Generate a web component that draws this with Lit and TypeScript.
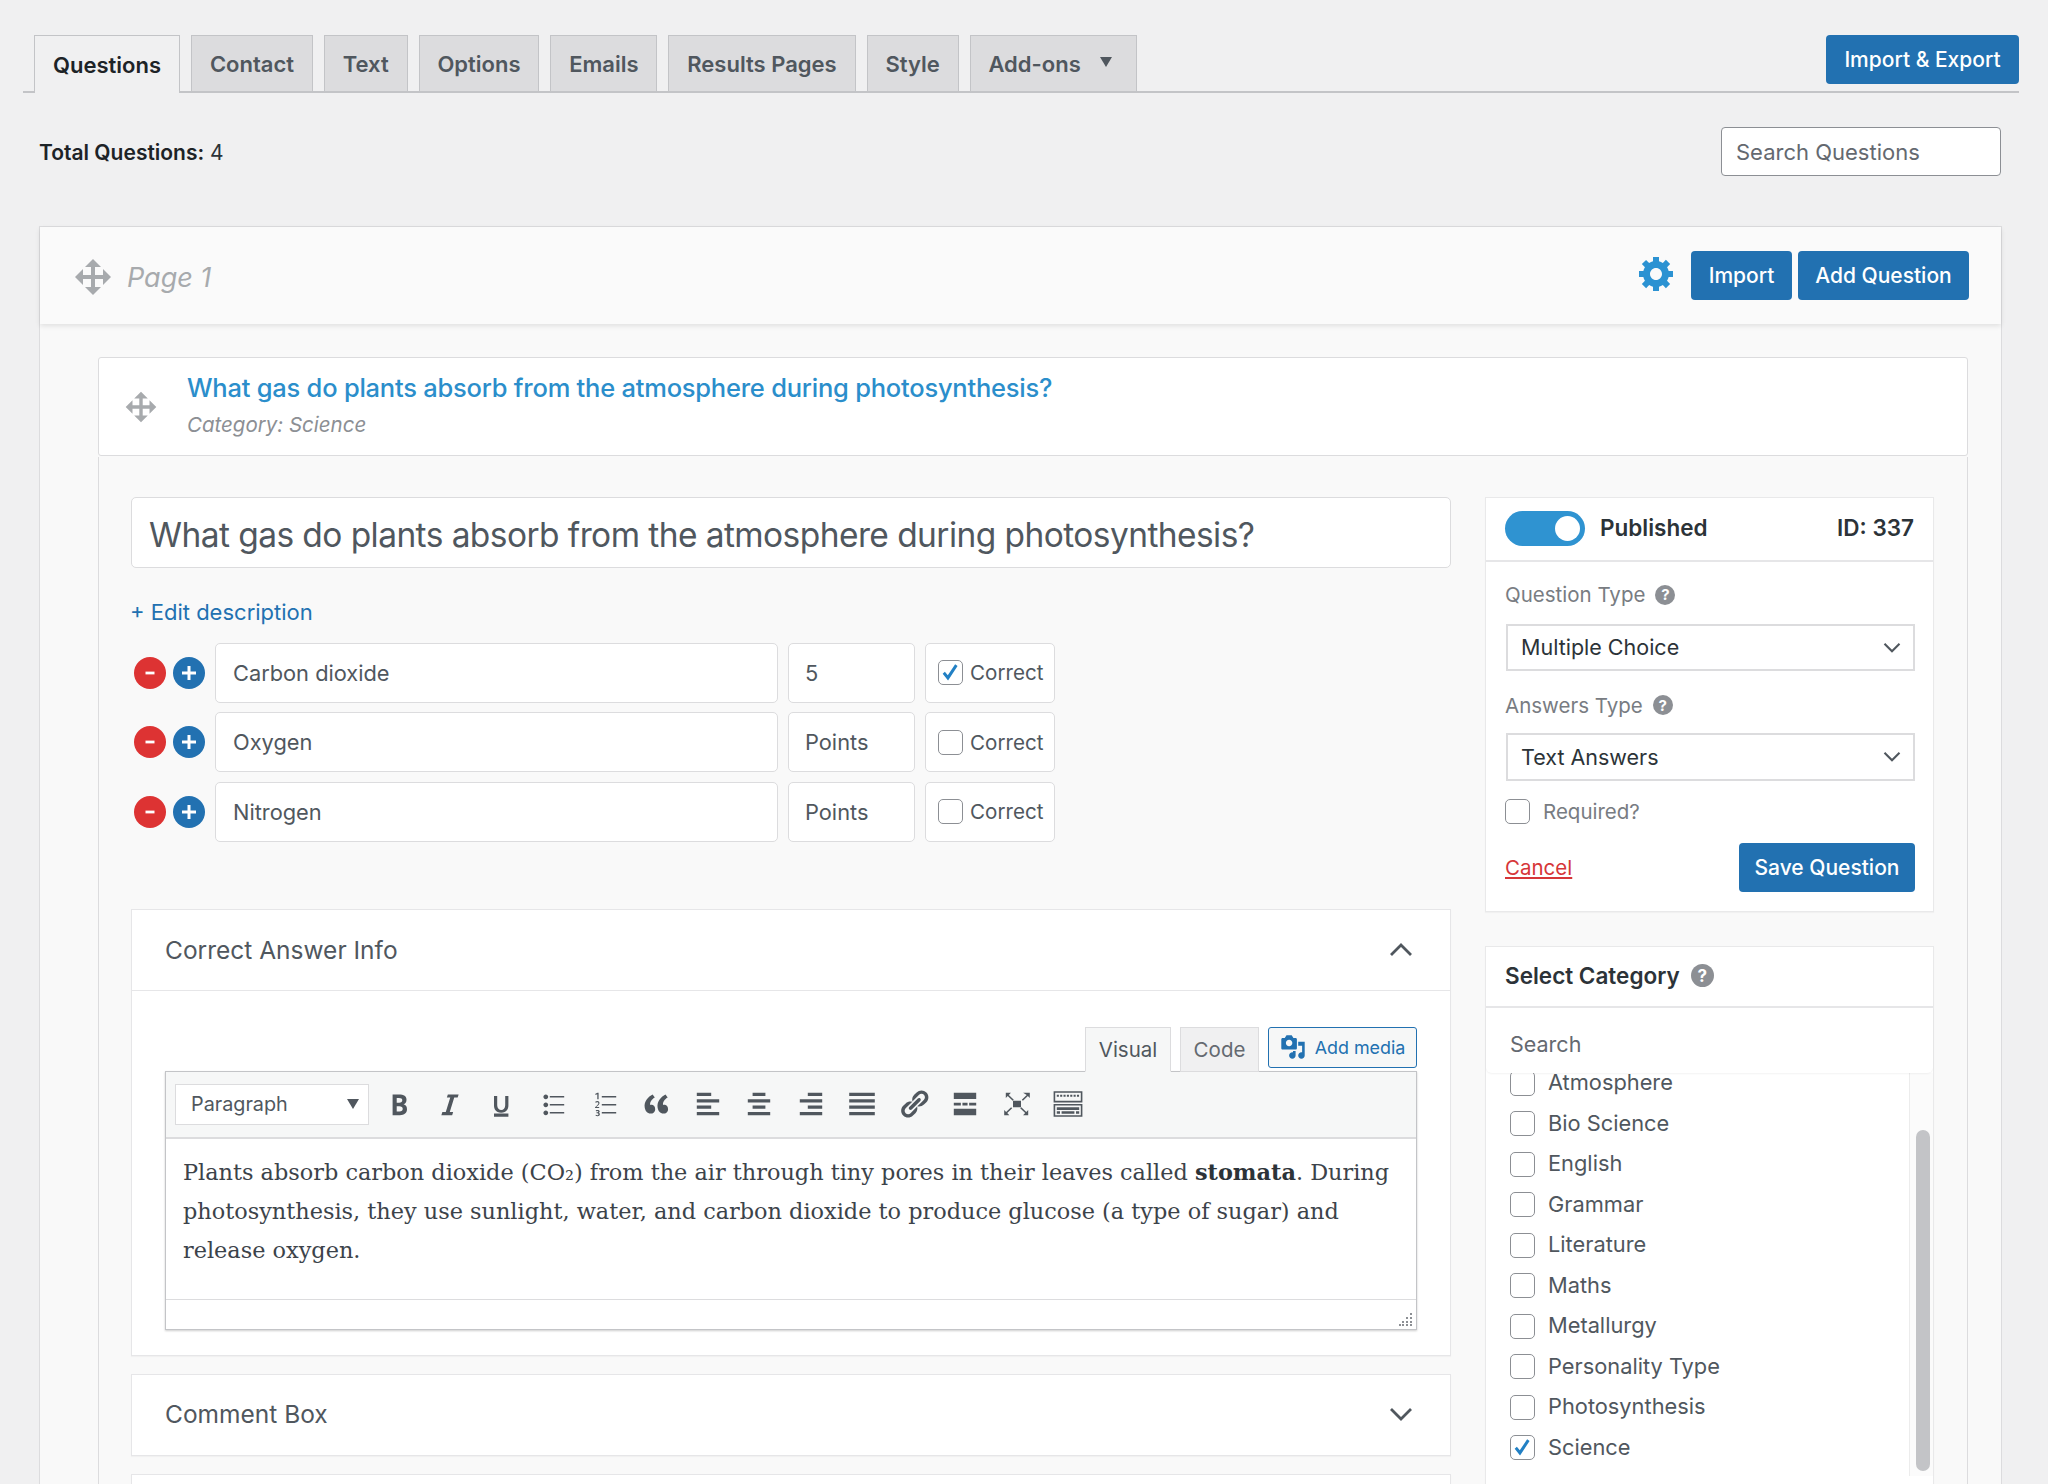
import { LitElement, html, css, svg } from "lit";
import { customElement } from "lit/decorators.js";

const keys = (xs: number[], y: number, h: number, w = 1.3) =>
  xs.map((x) => `M${x} ${y}h${w}v${h}h-${w}z`).join("");
const range = (a: number, b: number, s: number) => {
  const r: number[] = [];
  for (let x = a; x < b; x += s) r.push(Math.round(x * 10) / 10);
  return r;
};

const P: Record<string, string> = {
  move: "M19 10l-4 4v-3h-4v4h3l-4 4-4-4h3v-4H5v3l-4-4 4-4v3h4V5H6l4-4 4 4h-3v4h4V6z",
  gear: "M18 12h-2.18c-.17.7-.44 1.35-.81 1.93l1.54 1.54-2.1 2.1-1.54-1.54c-.58.36-1.23.63-1.91.79V19H8v-2.18c-.68-.16-1.33-.43-1.91-.79l-1.54 1.54-2.12-2.12 1.54-1.54c-.36-.58-.63-1.23-.79-1.91H1V9.03h2.17c.16-.7.44-1.35.8-1.94L2.43 5.55l2.1-2.1 1.54 1.54c.58-.37 1.24-.64 1.93-.81V2h3v2.18c.68.16 1.33.43 1.91.79l1.54-1.54 2.12 2.12-1.54 1.54c.36.59.64 1.24.8 1.94H18V12zm-8.5 1.5c1.66 0 3-1.34 3-3s-1.34-3-3-3-3 1.34-3 3 1.34 3 3 3z",
  bold: "M6 4v13h4.54c1.37 0 2.46-.33 3.26-1 .8-.66 1.2-1.58 1.2-2.77 0-.84-.17-1.51-.51-2.01s-.9-.85-1.67-1.03v-.09c.57-.1 1.02-.4 1.36-.9s.51-1.13.51-1.91c0-1.14-.39-1.98-1.17-2.5C12.75 4.26 11.5 4 9.78 4H6zm2.57 5.15V6.26h1.36c.73 0 1.27.11 1.61.32.34.22.51.58.51 1.07 0 .54-.16.92-.47 1.15s-.82.35-1.51.35h-1.5zm0 2.19h1.6c1.44 0 2.16.53 2.16 1.61 0 .6-.17 1.05-.51 1.34s-.86.43-1.57.43H8.57v-3.38z",
  italic: "M14.78 6h-2.13l-2.8 9h2.12l-.62 2H4.6l.62-2h2.14l2.8-9H8.03l.62-2h6.75z",
  underline: "M14 5h-2v5.71c0 1.99-1.12 2.98-2.45 2.98-1.32 0-2.55-1-2.55-2.96V5H5v5.87c0 1.91 1 4.54 4.48 4.54 3.49 0 4.52-2.58 4.52-4.54V5zm0 13v-2H5v2h9z",
  ul: "M5.5 7C4.67 7 4 6.33 4 5.5 4 4.68 4.67 4 5.5 4 6.32 4 7 4.68 7 5.5 7 6.33 6.32 7 5.5 7zM8 5h9v1H8V5zm-2.5 7c-.83 0-1.5-.67-1.5-1.5C4 9.68 4.67 9 5.5 9c.82 0 1.5.68 1.5 1.5 0 .83-.68 1.5-1.5 1.5zM8 10h9v1H8v-1zm-2.5 7c-.83 0-1.5-.67-1.5-1.5 0-.82.67-1.5 1.5-1.5.82 0 1.5.68 1.5 1.5 0 .83-.68 1.5-1.5 1.5zM8 15h9v1H8v-1z",
  ol: "M6 7V3h-.69L4 3.67v.71l1.18-.55V7H6zm2-2v1h9V5H8zm-1.64 7.5v-.7H4.69v-.01l.59-.53c.78-.69 1.27-1.19 1.27-1.85 0-.72-.49-1.21-1.3-1.21-.54 0-1 .19-1.33.44l.2.62c.24-.18.59-.36.99-.36.53 0 .74.3.74.67 0 .53-.49 1.03-1.53 1.95l-.56.51v.47h2.6zM8 10v1h9v-1H8zm0 5v1h9v-1H8zm-2.7 2.6c.9 0 1.5-.5 1.5-1.2 0-.5-.3-.8-.7-.9.4-.2.6-.5.6-.8 0-.6-.5-1-1.3-1-.5 0-.9.1-1.2.3l.2.6c.2-.1.5-.3.9-.3.3 0 .5.2.5.4 0 .4-.4.5-.8.5h-.3v.6h.3c.5 0 .9.2.9.6 0 .3-.2.6-.7.6-.4 0-.7-.2-.9-.3l-.2.6c.3.2.8.3 1.2.3z",
  quote: "M9.49 13.22c0-.74-.2-1.38-.61-1.9-.62-.78-1.83-.88-2.53-.72-.29-1.65 1.11-3.75 2.92-4.65L7.88 4c-2.73 1.3-5.42 4.28-4.96 8.05C3.21 14.43 4.59 16 6.54 16c.85 0 1.56-.25 2.12-.75s.83-1.18.83-2.03zm8.05 0c0-.74-.2-1.38-.61-1.9-.63-.78-1.83-.88-2.53-.72-.29-1.65 1.11-3.75 2.92-4.65L15.93 4c-2.73 1.3-5.41 4.28-4.96 8.05.29 2.38 1.66 3.95 3.61 3.95.85 0 1.56-.25 2.12-.75s.84-1.18.84-2.03z",
  left: "M12 5V3H3v2h9zm5 4V7H3v2h14zm-5 4v-2H3v2h9zm5 4v-2H3v2h14z",
  center: "M14 5V3H6v2h8zm3 4V7H3v2h14zm-3 4v-2H6v2h8zm3 4v-2H3v2h14z",
  right: "M17 5V3H8v2h9zm0 4V7H3v2h14zm0 4v-2H8v2h9zm0 4v-2H3v2h14z",
  justify: "M2 3h16v2H2V3zm0 4h16v2H2V7zm0 4h16v2H2v-2zm0 4h16v2H2v-2z",
  link: "M17.74 2.76c1.68 1.69 1.68 4.41 0 6.1l-1.53 1.52c-1.12 1.12-2.7 1.47-4.14 1.09l2.62-2.61.76-.77.76-.76c.84-.84.84-2.2 0-3.04-.84-.85-2.2-.85-3.04 0l-.77.76-3.38 3.38c-.37-1.44-.02-3.02 1.1-4.14l1.52-1.53c1.69-1.68 4.42-1.68 6.1 0zM8.59 13.43l5.34-5.34c.42-.42.42-1.1 0-1.52-.44-.43-1.13-.39-1.53 0l-5.33 5.34c-.42.42-.42 1.1 0 1.52.44.43 1.13.39 1.52 0zm-.76 2.29l4.14-4.15c.38 1.44.03 3.02-1.09 4.14l-1.52 1.53c-1.69 1.68-4.41 1.68-6.1 0-1.68-1.68-1.68-4.42 0-6.1l1.53-1.52c1.12-1.12 2.7-1.47 4.14-1.1l-4.14 4.15c-.85.84-.85 2.2 0 3.05.84.84 2.2.84 3.04 0z",
  more: "M3 3h14v3.8H3V3zm0 6.2h4.4v1.8H3V9.2zm5.4 0h3.2v1.8H8.4V9.2zm4.2 0H17v1.8h-4.4V9.2zM3 13h14v4H3v-4z",
  full: "M7.5 8h5v4h-5V8zM2 3h4.2L4.9 4.3 8 7.3 7.3 8 4.2 5 3 6.3V3H2zm16 0v3.3L16.8 5l-3.1 3-.7-.7 3.1-3L13.8 3H18zM2 17v-3.3L3.2 15l3.1-3 .7.7-3.1 3L5.2 17H2zm16 0h-4.2l1.3-1.3-3.1-3 .7-.7 3.1 3 1.2-1.3V17z",
  kb:
    "M1 2h18v7H1V2zm1 1v5h16V3H2z" +
    keys(range(3, 17, 2.1), 4.2, 1.3) +
    "M1 10h18v8H1v-8zm1 1v6h16v-6H2zm1 1h14v1.8H3V12z" +
    "M3 14.6h2v1.5H3zM6 14.6h8v1.5H6zM15 14.6h2v1.5h-2z",
  media: "M13 11V4c0-.55-.45-1-1-1h-1.67L9 1H5L3.67 3H2c-.55 0-1 .45-1 1v7c0 .55.45 1 1 1h10c.55 0 1-.45 1-1zM7 4.5c1.38 0 2.5 1.12 2.5 2.5S8.38 9.5 7 9.5 4.5 8.38 4.5 7 5.62 4.5 7 4.5zM14 6h5v10.5c0 1.38-1.12 2.5-2.5 2.5S14 17.88 14 16.5s1.12-2.5 2.5-2.5c.17 0 .34.02.5.05V9h-3V6zm-4 8.05V13h2v3.5c0 1.38-1.12 2.5-2.5 2.5S7 17.88 7 16.5 8.12 14 9.5 14c.17 0 .34.02.5.05z",
};

const icon = (name: string, cls = "") =>
  html`<svg class="icon ${cls}" viewBox="0 0 20 20" fill="currentColor" fill-rule="evenodd">${svg`<path d=${P[name]}></path>`}</svg>`;

const check = (on: boolean, cls = "") => html`<span class="cb ${cls}">
  ${on
    ? html`<svg viewBox="1 0 18 18"><path d="M4 10.5l1.8-1.8 2.4 3L14.2 2.6l2 1.4L8.4 16z" fill="#2280c4"></path></svg>`
    : ""}
</span>`;

const chevron = (up: boolean, cls = "") =>
  html`<svg class="chev ${cls}" viewBox="0 0 24 14">
    <path d=${up ? "M2 12L12 2l10 10" : "M2 2l10 10L22 2"} fill="none" stroke="currentColor" stroke-width="2.8"></path>
  </svg>`;

const help = (cls = "") => html`<span class="help ${cls}">?</span>`;

@customElement("app-root")
export class AppRoot extends LitElement {
  static styles = css`
    :host {
      display: block;
      height: 1484px;
      overflow: hidden;
      background: #f0f0f1;
      font-family: Inter, "Liberation Sans", sans-serif;
      font-size: 21px;
      color: #50575e;
      box-sizing: border-box;
    }
    * { box-sizing: border-box; }
    .icon { width: 32px; height: 32px; display: block; }

    .top { padding: 35px 29px 0 23px; }
    .tabbar {
      display: flex;
      justify-content: space-between;
      align-items: flex-start;
      height: 58px;
      border-bottom: 2px solid #c3c4c7;
    }
    .tabs { display: flex; gap: 11px; padding-left: 11px; }
    .tab {
      height: 56px;
      padding: 0 17.85px;
      display: flex;
      align-items: center;
      background: #dcdcde;
      border: 1px solid #c3c4c7;
      border-bottom: none;
      font-weight: 600;
      font-size: 22px;
      color: #50575e;
      white-space: nowrap;
    }
    .tab.active { height: 58px; background: #f0f0f1; color: #1d2327; padding: 0 18px; }
    .tab.addon { padding-right: 24px; }
    .caret {
      width: 0; height: 0; margin-left: 19px; margin-top: -4px;
      border-left: 6px solid transparent;
      border-right: 6px solid transparent;
      border-top: 10px solid #50575e;
    }
    .btn {
      background: #2271b1;
      color: #fff;
      border-radius: 4px;
      display: flex;
      align-items: center;
      justify-content: center;
      height: 49px;
      font-weight: 500;
      font-size: 21px;
      white-space: nowrap;
    }
    .btn.ie { width: 193px; }
    .stat {
      display: flex;
      justify-content: space-between;
      align-items: center;
      margin-top: 34px;
      padding: 0 18px 0 16px;
    }
    .total { color: #2c3338; padding-top: 1px; }
    .total b { font-weight: 600; color: #1d2327; }
    .search {
      width: 280px;
      height: 49px;
      background: #fff;
      border: 1px solid #8c8f94;
      border-radius: 4px;
      display: flex;
      align-items: center;
      padding-left: 14px;
      font-size: 22px;
      color: #646970;
    }

    .page {
      margin: 50px 46px 0 39px;
      border: 1px solid #dcdcde;
      border-bottom: none;
      background: #f9f9f9;
    }
    .page-head {
      height: 97px;
      display: flex;
      align-items: center;
      padding: 0 32px 0 33px;
      background: #fafafa;
      box-shadow: 0 2px 5px rgba(0, 0, 0, 0.1);
      position: relative;
    }
    .move { color: #a7aaad; }
    .move.lg { width: 40px; height: 40px; margin-top: 2px; }
    .move.md { width: 34px; height: 34px; margin-top: 2px; }
    .page-title {
      font-style: italic;
      font-size: 27px;
      color: #a7aaad;
      margin-left: 14px;
      padding-top: 4px;
      flex: 1;
    }
    .gear { width: 40px; height: 40px; color: #2b92d2; margin: -6px 14px 0 0; }
    .btn.import { width: 101px; margin-right: 6px; }
    .btn.add { width: 171px; }

    .page-body { padding: 32.5px 33px 0 58px; }
    .qhead {
      height: 99px;
      background: #fff;
      border: 1px solid #dcdcde;
      border-radius: 3px;
      display: flex;
      align-items: center;
      padding-left: 25px;
      gap: 29px;
    }
    .qtitle { color: #2b8ecb; font-size: 25.5px; font-weight: 500; line-height: 32px; letter-spacing: -0.23px; padding-top: 1px; }
    .qcat { font-style: italic; font-size: 20.5px; color: #8c8f94; margin-top: 8px; line-height: 26px; padding-bottom: 3px; }

    .qbody {
      margin-top: 1px;
      border-left: 1px solid #dcdcde;
      border-right: 1px solid #dcdcde;
      display: flex;
      gap: 34px;
      padding: 40px 33px 0 32px;
      height: 1030px;
    }
    .main { width: 1320px; flex: none; }
    .qinput {
      height: 71px;
      background: #fff;
      border: 1px solid #dcdcde;
      border-radius: 5px;
      display: flex;
      align-items: center;
      padding: 6px 0 0 17px;
      font-size: 33.5px;
      letter-spacing: -0.57px;
      color: #50575e;
    }
    .editdesc { color: #2271b1; margin: 28px 0 0 -1px; line-height: 32px; font-size: 22px; }
    .rows { display: flex; flex-direction: column; gap: 9.5px; margin-top: 15px; }
    .row { display: flex; height: 60px; align-items: center; padding-left: 3px; }
    .rnd {
      width: 32px; height: 32px; border-radius: 50%;
      color: #fff;
      display: flex; align-items: center; justify-content: center;
      flex: none;
    }
    .rnd.minus { background: #dd3333; margin-right: 7px; }
    .rnd.plus { background: #2271b1; margin-right: 10px; }
    .rnd svg { width: 20px; height: 20px; display: block; }
    .fld {
      height: 60px;
      background: #fff;
      border: 1px solid #dcdcde;
      border-radius: 5px;
      display: flex;
      align-items: center;
      font-size: 21.8px;
      flex: none;
    }
    .fld.a { width: 563px; padding-left: 17px; margin-right: 10px; }
    .fld.p { width: 127px; padding-left: 16px; margin-right: 10px; }
    .fld.c { width: 130px; padding-left: 12px; gap: 7px; font-size: 20.6px; }
    .cb {
      width: 25px; height: 25px;
      border: 1.5px solid #8c8f94;
      border-radius: 5px;
      background: #fff;
      display: block;
      flex: none;
    }
    .cb svg { display: block; width: 22px; height: 22px; }

    .box {
      background: #fff;
      border: 1px solid #e6e6e8;
      box-shadow: 0 1px 1px rgba(0, 0, 0, 0.03);
      margin-top: 18px;
    }
    .box.info { margin-top: 67px; height: 447px; }
    .box.cbox { height: 82px; }
    .cbox .box-head { padding-bottom: 2px; }
    .box.last { height: 60px; }
    .box-head {
      height: 81px;
      display: flex;
      align-items: center;
      justify-content: space-between;
      padding: 0 37px 0 33px;
      font-size: 24.5px;
      color: #50575e;
    }
    .info .box-head { border-bottom: 1px solid #e6e6e8; }
    .chev { width: 24px; height: 14px; color: #50575e; display: block; }
    .box-body { padding: 36px 33px 0 33px; }
    .etabs { display: flex; justify-content: flex-end; gap: 9px; height: 45px; position: relative; margin-bottom: -1px; z-index: 1; }
    .etab {
      height: 45px;
      display: flex;
      align-items: center;
      justify-content: center;
      border: 1px solid #dcdcde;
      background: #f0f0f1;
      font-size: 20.5px;
      color: #646970;
    }
    .etab.on { width: 86px; background: #f6f7f7; border-bottom-color: #f6f7f7; color: #50575e; }
    .etab.code { width: 79px; }
    .addmedia {
      width: 149px;
      height: 41px;
      border: 1.5px solid #2271b1;
      border-radius: 3px;
      background: #f6f7f7;
      color: #2271b1;
      display: flex;
      align-items: center;
      justify-content: center;
      gap: 9px;
      font-size: 17.9px;
    }
    .addmedia .icon { width: 26px; height: 26px; }
    .editor {
      border: 1px solid #c3c4c7;
      height: 259px;
      display: flex;
      flex-direction: column;
      box-shadow: 0 1px 2px rgba(0, 0, 0, 0.2);
    }
    .toolbar {
      height: 67px;
      flex: none;
      background: #f6f7f7;
      border-bottom: 2px solid #dcdcde;
      display: flex;
      align-items: center;
      padding-left: 9px;
      color: #50575e;
    }
    .para {
      width: 194px;
      height: 41px;
      background: #fff;
      border: 1px solid #dcdcde;
      display: flex;
      align-items: center;
      justify-content: space-between;
      padding: 0 9px 0 15px;
      font-size: 19.8px;
      margin-right: 4px;
    }
    .para i { width: 0; height: 0; border-left: 6px solid transparent; border-right: 6px solid transparent; border-top: 10px solid #50575e; }
    .tb { width: 51.5px; flex: none; display: flex; justify-content: center; }
    .content {
      flex: 1;
      padding: 14px 17px 0;
      font-family: "DejaVu Serif", "Liberation Serif", serif;
      font-size: 22.4px;
      line-height: 39px;
      color: #3c434a;
      background: #fff;
      white-space: nowrap;
    }
    .content b { font-weight: 700; color: #2c3338; }
    .status {
      height: 30px;
      flex: none;
      border-top: 1px solid #dcdcde;
      background: #fff;
      display: flex;
      justify-content: flex-end;
      align-items: flex-end;
      padding: 0 3px 3px 0;
    }
    .grip { width: 14px; height: 14px; display: block; }

    .side { width: 449px; flex: none; }
    .card { background: #fff; border: 1px solid #e9e9ea; box-shadow: 0 1px 1px rgba(0, 0, 0, 0.03); }
    .card.one { height: 415.5px; }
    .card.two { margin-top: 34px; height: 560px; }
    .s-head {
      height: 64px;
      border-bottom: 2px solid #e6e6e8;
      display: flex;
      align-items: center;
      padding: 0 19px;
      font-weight: 600;
      font-size: 22.5px;
      color: #2c3338;
    }
    .s-head span:not(.toggle) { margin-top: -2px; }
    .toggle {
      width: 80px; height: 35px;
      border-radius: 18px;
      background: #2f93d1;
      margin-right: 15px;
      display: flex;
      justify-content: flex-end;
      align-items: center;
      padding-right: 5px;
      flex: none;
    }
    .toggle i { display: block; width: 25px; height: 25px; border-radius: 50%; background: #fff; }
    .grow { flex: 1; }
    .s-body { padding: 19px 18px 0 19px; }
    .lbl { display: flex; align-items: center; gap: 10px; height: 28px; font-size: 20.5px; color: #787c82; }
    .help {
      width: 20px; height: 20px; border-radius: 50%;
      background: #8c8f94; color: #fff;
      font-size: 15px; font-weight: 700;
      display: flex; align-items: center; justify-content: center;
      flex: none;
    }
    .sel {
      height: 47.5px;
      margin: 15px 0 20px 1px;
      border: 2px solid #dcdcde;
      display: flex;
      align-items: center;
      justify-content: space-between;
      padding: 0 12px 0 13px;
      font-size: 21.5px;
      color: #2c3338;
    }
    .sel.b { margin: 14px 0 18.5px 1px; }
    .sel .chev { width: 18px; height: 11px; color: #50575e; }
    .req { display: flex; align-items: center; gap: 13px; font-size: 20.5px; color: #787c82; }
    .actions { display: flex; justify-content: space-between; align-items: center; margin-top: 19px; }
    .cancel { color: #d63638; text-decoration: underline; font-size: 20.5px; }
    .btn.save { width: 176px; }

    .cat-head { height: 61px; border-bottom: 2px solid #e6e6e8; display: flex; align-items: center; gap: 11px; padding: 0 0 2px 19px; font-weight: 600; font-size: 22.5px; color: #2c3338; }
    .help.lg { width: 23px; height: 23px; font-size: 17px; }
    .cat-search {
      height: 65px;
      padding: 6px 0 0 24px;
      display: flex;
      align-items: center;
      font-size: 21.5px;
      color: #646970;
      background: #fff;
      border-radius: 0 0 6px 6px;
      box-shadow: 0 1px 2px rgba(0, 0, 0, 0.05);
      position: relative;
      z-index: 1;
    }
    .list { display: flex; height: 403px; }
    .items { flex: 1; overflow: hidden; border-right: 1px solid #ececec; }
    .items-in { margin-top: -10px; padding-left: 24px; }
    .item { display: flex; align-items: center; gap: 13px; height: 40.5px; font-size: 21.8px; color: #50575e; }
    .item span:last-child { line-height: 1; }
    .track { width: 23px; flex: none; background: #fbfbfb; padding: 57px 3px 0 6px; }
    .thumb { height: 341px; background: #c3c4c7; border-radius: 7px; }
  `;

  private answers = [
    { a: "Carbon dioxide", p: "5", on: true },
    { a: "Oxygen", p: "Points", on: false },
    { a: "Nitrogen", p: "Points", on: false },
  ];
  private cats = ["Atmosphere", "Bio Science", "English", "Grammar", "Literature", "Maths", "Metallurgy", "Personality Type", "Photosynthesis", "Science"];
  private tools = ["bold", "italic", "underline", "ul", "ol", "quote", "left", "center", "right", "justify", "link", "more", "full", "kb"];
  private tabs = ["Contact", "Text", "Options", "Emails", "Results Pages", "Style"];

  render() {
    return html`
      <div class="top">
        <div class="tabbar">
          <div class="tabs">
            <div class="tab active">Questions</div>
            ${this.tabs.map((t) => html`<div class="tab">${t}</div>`)}
            <div class="tab addon">Add-ons<span class="caret"></span></div>
          </div>
          <div class="btn ie">Import &amp; Export</div>
        </div>
        <div class="stat">
          <div class="total"><b>Total Questions:</b> 4</div>
          <div class="search">Search Questions</div>
        </div>
      </div>
      <div class="page">
        <div class="page-head">
          ${icon("move", "move lg")}
          <div class="page-title">Page 1</div>
          ${icon("gear", "gear")}
          <div class="btn import">Import</div>
          <div class="btn add">Add Question</div>
        </div>
        <div class="page-body">
          <div class="qhead">
            ${icon("move", "move md")}
            <div>
              <div class="qtitle">What gas do plants absorb from the atmosphere during photosynthesis?</div>
              <div class="qcat">Category: Science</div>
            </div>
          </div>
          <div class="qbody">
            <div class="main">
              <div class="qinput">What gas do plants absorb from the atmosphere during photosynthesis?</div>
              <div class="editdesc">+ Edit description</div>
              <div class="rows">
                ${this.answers.map(
                  (r) => html`<div class="row">
                    <span class="rnd minus"><svg viewBox="0 0 20 20"><path d="M5.5 8.6h9v2.8h-9z" fill="currentColor"></path></svg></span>
                    <span class="rnd plus"><svg viewBox="0 0 20 20"><path d="M8.5 3h3v5.5H17v3h-5.5V17h-3v-5.5H3v-3h5.5z" fill="currentColor"></path></svg></span>
                    <div class="fld a">${r.a}</div>
                    <div class="fld p">${r.p}</div>
                    <div class="fld c">${check(r.on)}<span>Correct</span></div>
                  </div>`
                )}
              </div>
              <div class="box info">
                <div class="box-head"><span>Correct Answer Info</span>${chevron(true)}</div>
                <div class="box-body">
                  <div class="etabs">
                    <div class="etab on">Visual</div>
                    <div class="etab code">Code</div>
                    <div class="addmedia">${icon("media")}<span>Add media</span></div>
                  </div>
                  <div class="editor">
                    <div class="toolbar">
                      <div class="para"><span>Paragraph</span><i></i></div>
                      ${this.tools.map((t) => html`<div class="tb">${icon(t)}</div>`)}
                    </div>
                    <div class="content">
                      Plants absorb carbon dioxide (CO₂) from the air through tiny pores in their leaves called <b>stomata</b>. During<br />
                      photosynthesis, they use sunlight, water, and carbon dioxide to produce glucose (a type of sugar) and<br />
                      release oxygen.
                    </div>
                    <div class="status">
                      <svg class="grip" viewBox="0 0 14 14" fill="#8c8f94">
                        <rect x="11" y="1" width="2" height="2"></rect>
                        <rect x="7" y="5" width="2" height="2"></rect><rect x="11" y="5" width="2" height="2"></rect>
                        <rect x="3" y="9" width="2" height="2"></rect><rect x="7" y="9" width="2" height="2"></rect><rect x="11" y="9" width="2" height="2"></rect>
                        <rect x="0" y="12" width="2" height="2"></rect><rect x="3" y="12" width="2" height="2"></rect><rect x="7" y="12" width="2" height="2"></rect><rect x="11" y="12" width="2" height="2"></rect>
                      </svg>
                    </div>
                  </div>
                </div>
              </div>
              <div class="box cbox">
                <div class="box-head"><span>Comment Box</span>${chevron(false)}</div>
              </div>
              <div class="box last"></div>
            </div>
            <div class="side">
              <div class="card one">
                <div class="s-head">
                  <span class="toggle"><i></i></span>
                  <span>Published</span>
                  <span class="grow"></span>
                  <span>ID: 337</span>
                </div>
                <div class="s-body">
                  <div class="lbl">Question Type ${help()}</div>
                  <div class="sel"><span>Multiple Choice</span>${chevron(false)}</div>
                  <div class="lbl">Answers Type ${help()}</div>
                  <div class="sel b"><span>Text Answers</span>${chevron(false)}</div>
                  <div class="req">${check(false)}<span>Required?</span></div>
                  <div class="actions">
                    <span class="cancel">Cancel</span>
                    <div class="btn save">Save Question</div>
                  </div>
                </div>
              </div>
              <div class="card two">
                <div class="cat-head">Select Category ${help("lg")}</div>
                <div class="cat-search">Search</div>
                <div class="list">
                  <div class="items">
                    <div class="items-in">
                      ${this.cats.map(
                        (c) => html`<div class="item">${check(c === "Science")}<span>${c}</span></div>`
                      )}
                    </div>
                  </div>
                  <div class="track"><div class="thumb"></div></div>
                </div>
              </div>
            </div>
          </div>
        </div>
      </div>
    `;
  }
}
